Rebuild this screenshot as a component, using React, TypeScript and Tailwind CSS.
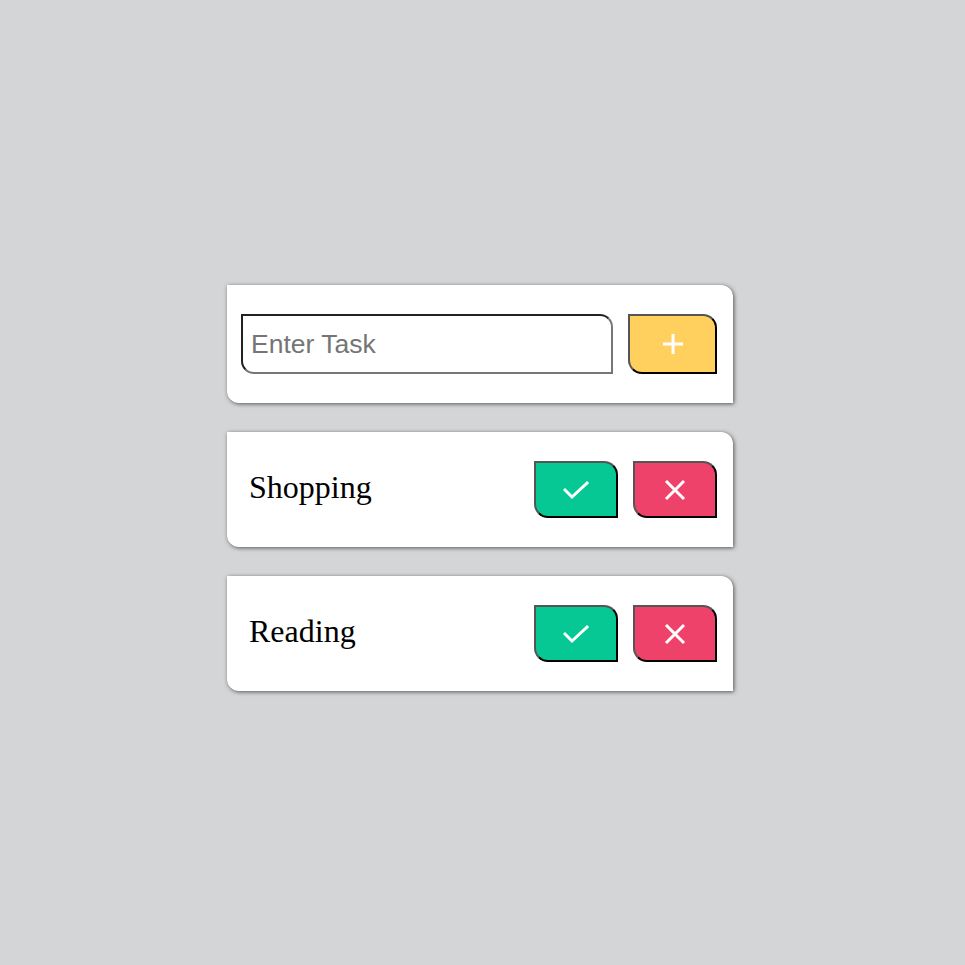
import { useState } from "react";

type Task = { id: number; name: string };

function CheckIcon() {
    return (
        <svg width="26" height="20" viewBox="0 0 26 20" fill="none">
            <polyline points="2,10 9,17 24,3" stroke="white" strokeWidth="3" strokeLinecap="square" />
        </svg>
    );
}

function CrossIcon() {
    return (
        <svg width="22" height="22" viewBox="0 0 22 22" fill="none">
            <path d="M2 2 L20 20 M20 2 L2 20" stroke="white" strokeWidth="3" />
        </svg>
    );
}

function PlusIcon() {
    return (
        <svg width="22" height="22" viewBox="0 0 22 22" fill="none">
            <path d="M11 1 V21 M1 11 H21" stroke="white" strokeWidth="3" />
        </svg>
    );
}

export default function App() {
    const [tasks, setTasks] = useState<Task[]>([
        { id: 1, name: "Shopping" },
        { id: 2, name: "Reading" },
    ]);
    const [text, setText] = useState("");

    const addTask = () => {
        if (!text.trim()) return;
        setTasks([...tasks, { id: Date.now(), name: text }]);
        setText("");
    };

    const removeTask = (id: number) => setTasks(tasks.filter((t) => t.id !== id));

    return (
        <div className="min-h-screen bg-[#d4d5d7] pl-[227px] pt-[285px]">
            <div className="flex w-[506px] flex-col gap-[29px]">
                <div className="flex items-center gap-[15px] rounded-tr-[12px] rounded-bl-[12px] bg-white pl-[14px] pr-[16px] py-[29px] shadow-[1px_1px_4px_#555]">
                    <input
                        value={text}
                        onChange={(e) => setText(e.target.value)}
                        placeholder="Enter Task"
                        className="h-[60px] w-[372px] rounded-tr-[13px] rounded-bl-[13px] border-2 border-l-[#222] border-t-[#222] border-r-[#777] border-b-[#777] bg-white pl-[8px] font-['Liberation_Sans',Arial,sans-serif] text-[26.5px] text-black outline-none placeholder:text-[#757575]"
                    />
                    <button
                        onClick={addTask}
                        className="flex h-[60px] w-[89px] items-center justify-center rounded-tr-[14px] rounded-bl-[14px] border-2 border-l-[#555] border-t-[#555] border-r-black border-b-black bg-[#ffd05e]"
                    >
                        <PlusIcon />
                    </button>
                </div>

                {tasks.map((task) => (
                    <div
                        key={task.id}
                        className="flex items-center justify-between rounded-tr-[12px] rounded-bl-[12px] bg-white pl-[22px] pr-[16px] py-[29px] shadow-[1px_1px_4px_#555]"
                    >
                        <span className="mb-[6px] font-['Liberation_Serif','Times_New_Roman',serif] text-[32px] leading-none text-black">
                            {task.name}
                        </span>
                        <div className="flex gap-[15px]">
                            <button className="flex h-[57px] w-[84px] items-center justify-center rounded-tr-[14px] rounded-bl-[14px] border-2 border-l-[#555] border-t-[#555] border-r-black border-b-black bg-[#06c894]">
                                <CheckIcon />
                            </button>
                            <button
                                onClick={() => removeTask(task.id)}
                                className="flex h-[57px] w-[84px] items-center justify-center rounded-tr-[14px] rounded-bl-[14px] border-2 border-l-[#555] border-t-[#555] border-r-black border-b-black bg-[#ef426b]"
                            >
                                <CrossIcon />
                            </button>
                        </div>
                    </div>
                ))}
            </div>
        </div>
    );
}
